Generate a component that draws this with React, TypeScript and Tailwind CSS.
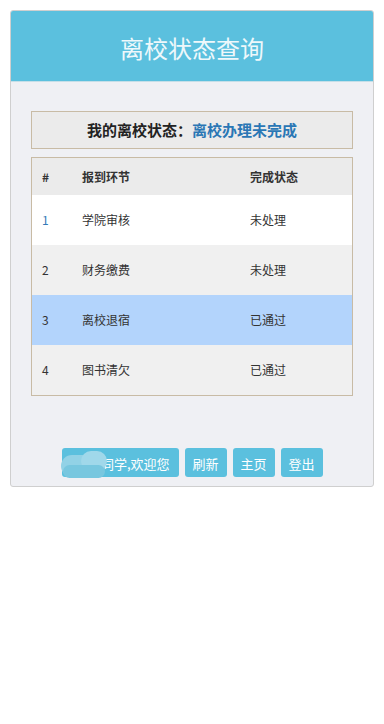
import React from "react";

const rows = [
  { n: "1", step: "学院审核", status: "未处理", bg: "bg-white", nc: "text-[#337ab7]" },
  { n: "2", step: "财务缴费", status: "未处理", bg: "bg-[#f0f0f0]", nc: "text-[#333]" },
  { n: "3", step: "离校退宿", status: "已通过", bg: "bg-[#b3d4fc]", nc: "text-[#333]" },
  { n: "4", step: "图书清欠", status: "已通过", bg: "bg-[#f0f0f0]", nc: "text-[#333]" },
];

export default function App() {
  return (
    <div
      className="w-[384px] h-[724px] bg-white pt-[10px] px-[10px]"
      style={{ fontFamily: '"Microsoft YaHei", "Noto Sans CJK SC", "Noto Sans", sans-serif' }}
    >
      <div className="w-[364px] border border-[#cfcfcf] rounded-[3px] bg-[#eff0f4] overflow-hidden">
        <div className="h-[71px] bg-[#5bc0de] flex items-center justify-center border-b border-[#c5dfe8] pt-[4px]">
          <span className="text-[24px] text-[#eef8fb] leading-none">离校状态查询</span>
        </div>
        <div className="px-[20px] pt-[29px]">
          <div className="h-[38px] border border-[#c8bba5] bg-[#ebebeb] flex items-center justify-center text-[15px] font-bold">
            <span className="text-[#222]">我的离校状态：</span>
            <span className="text-[#2a77b5]">离校办理未完成</span>
          </div>
          <div className="mt-[8px] border border-[#c8bba5] text-[12px] text-[#333]">
            <div className="h-[37px] bg-[#ebebeb] flex items-center font-bold">
              <div className="w-[50px] pl-[10px]">#</div>
              <div className="w-[168px]">报到环节</div>
              <div className="flex-1">完成状态</div>
            </div>
            {rows.map((r) => (
              <div key={r.n} className={`h-[50px] flex items-center ${r.bg}`}>
                <div className={`w-[50px] pl-[10px] ${r.nc}`}>{r.n}</div>
                <div className="w-[168px]">{r.step}</div>
                <div className="flex-1">{r.status}</div>
              </div>
            ))}
          </div>
        </div>
        <div className="flex justify-center gap-[6px] mt-[52px] mb-[9px] text-[13px] text-white">
          <div className="relative h-[29px] w-[117px] bg-[#5bc0de] rounded-[3px] flex items-center justify-end pr-[9px] pt-[2px]">
            <span>同学,欢迎您</span>
            <div className="absolute left-[-1px] top-[3px] w-[48px] h-[27px]">
              <div className="absolute left-[0px] top-[4px] w-[44px] h-[22px] rounded-[11px] bg-[#92d2e6]" />
              <div className="absolute left-[20px] top-[0px] w-[26px] h-[20px] rounded-full bg-[#a0d8ea]" />
              <div className="absolute left-[2px] top-[14px] w-[42px] h-[13px] rounded-[7px] bg-[#78c7df]" />
            </div>
          </div>
          <div className="h-[29px] w-[42px] bg-[#5bc0de] rounded-[3px] flex items-center justify-center pt-[2px]">刷新</div>
          <div className="h-[29px] w-[42px] bg-[#5bc0de] rounded-[3px] flex items-center justify-center pt-[2px]">主页</div>
          <div className="h-[29px] w-[42px] bg-[#5bc0de] rounded-[3px] flex items-center justify-center pt-[2px]">登出</div>
        </div>
      </div>
    </div>
  );
}
